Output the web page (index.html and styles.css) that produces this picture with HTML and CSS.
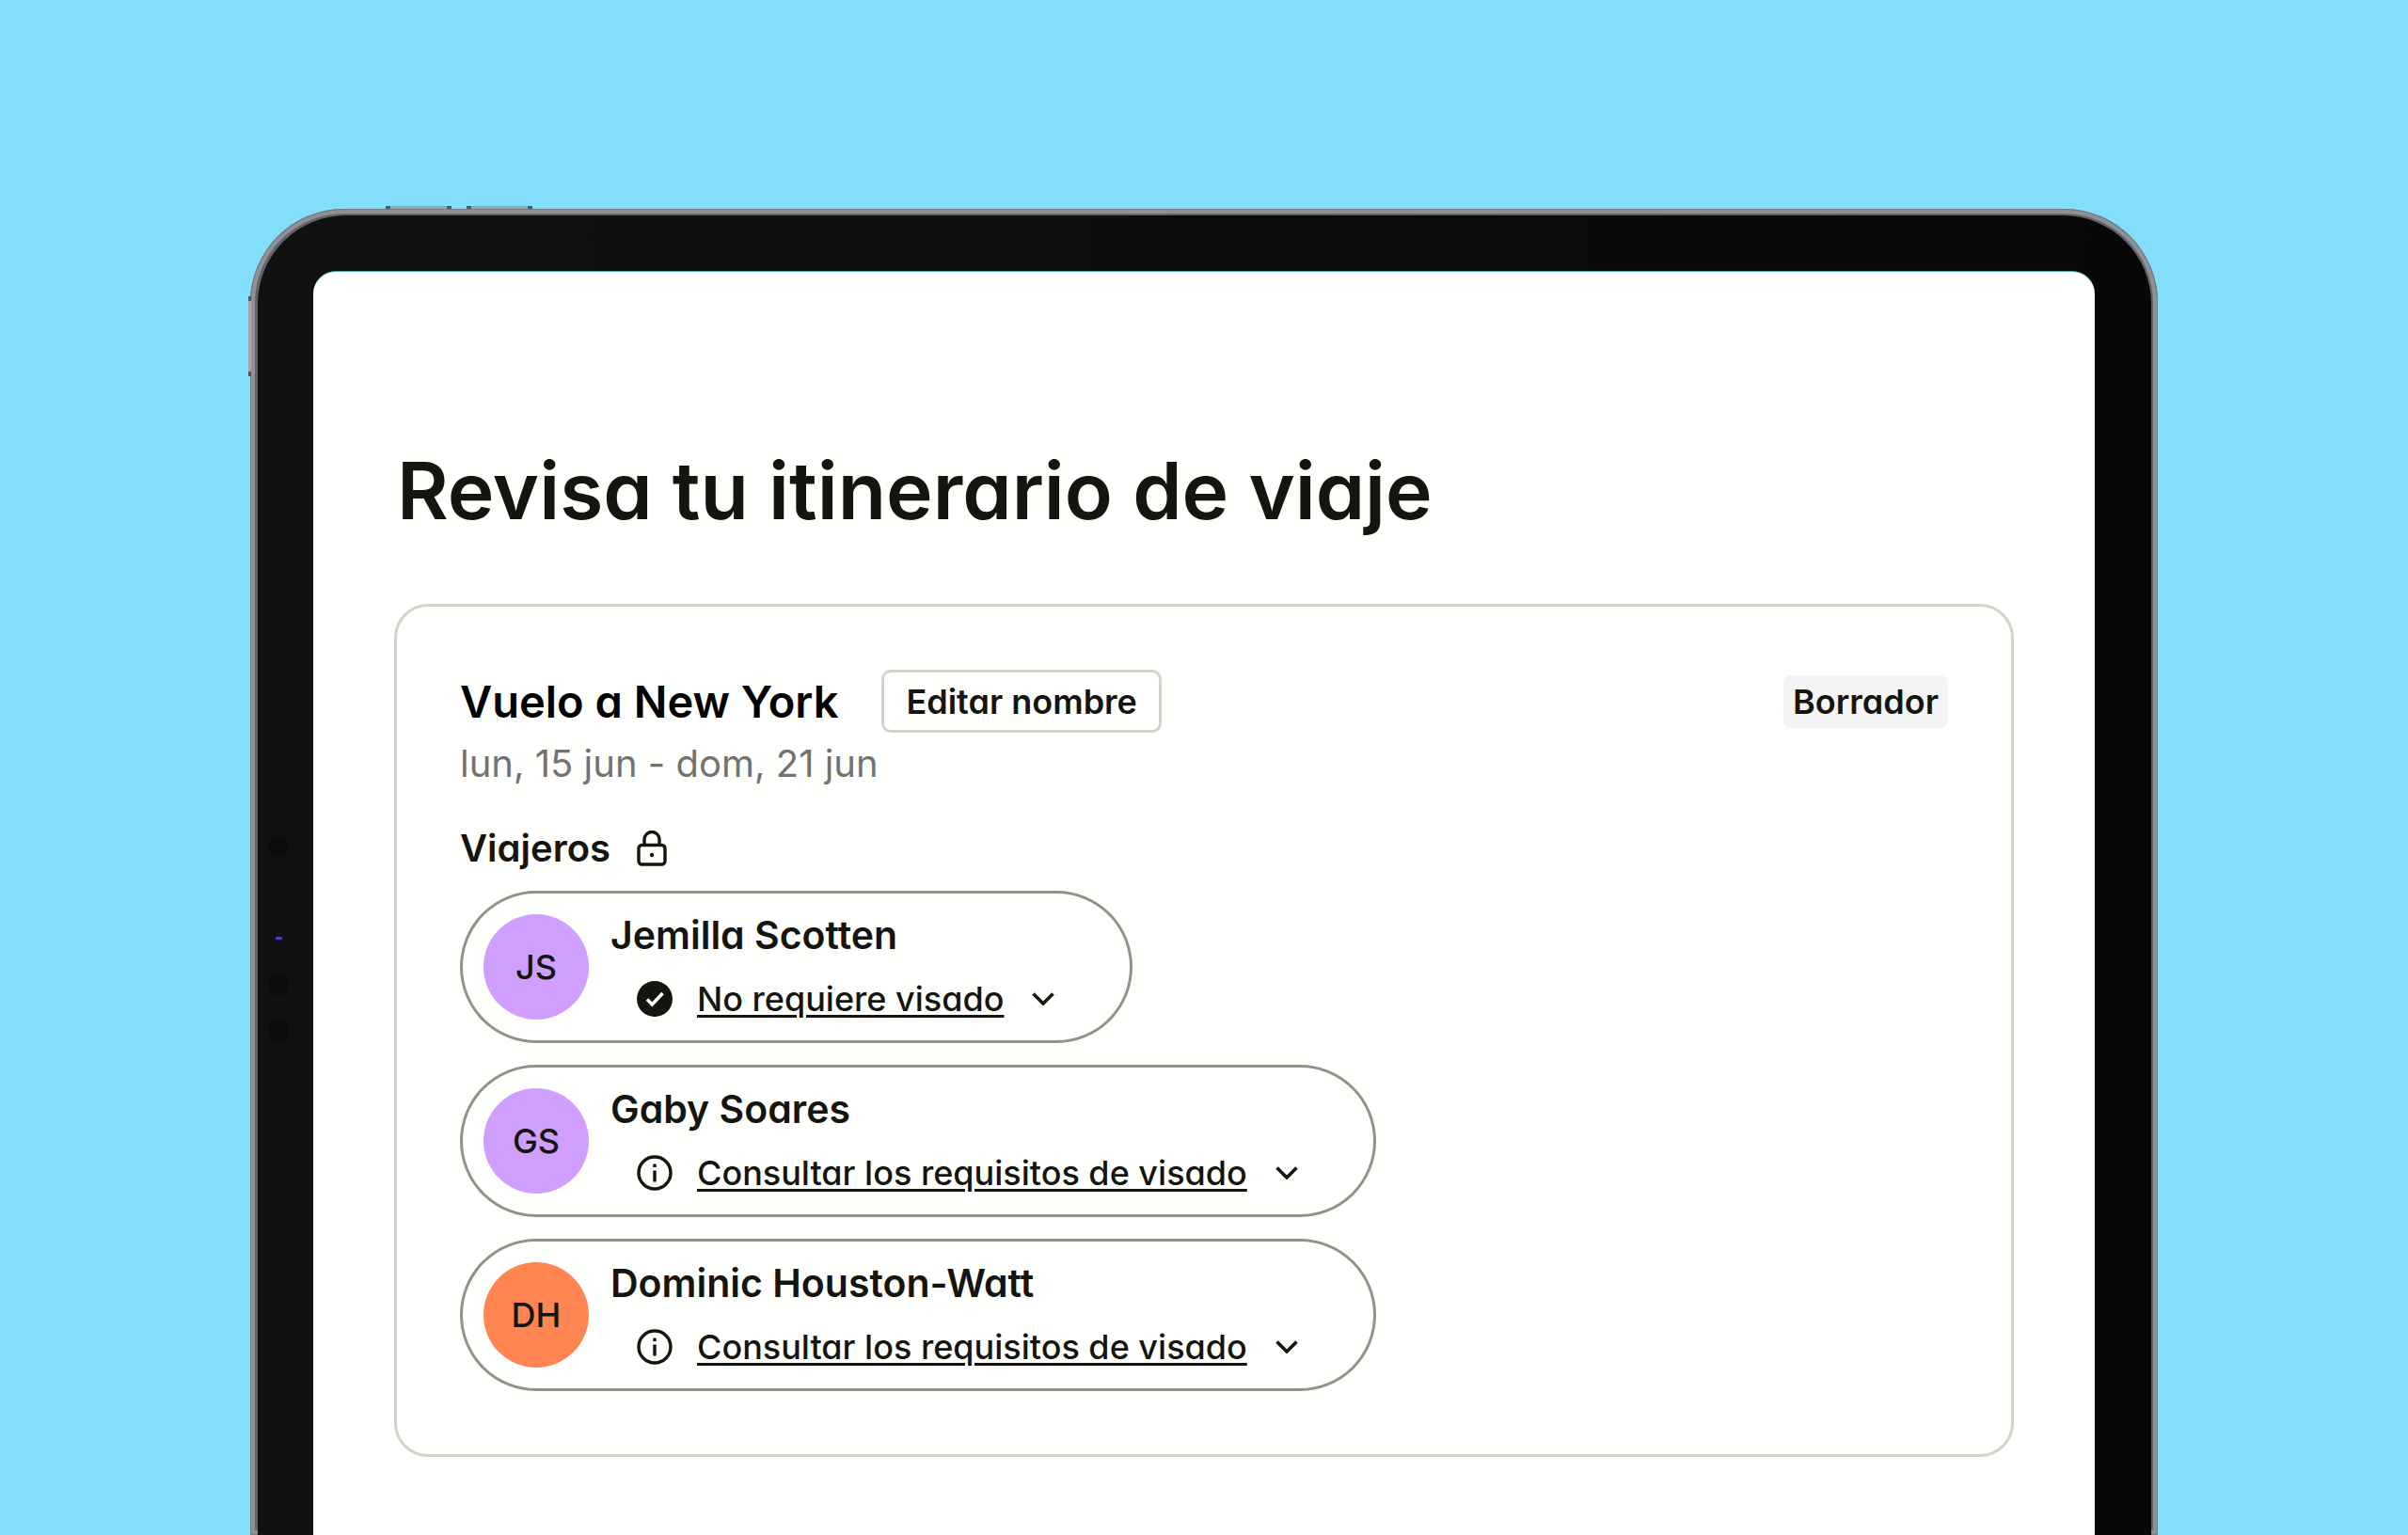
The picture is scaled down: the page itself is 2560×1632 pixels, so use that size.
FILE: index.html
```html
<!DOCTYPE html>
<html lang="es">
<head>
    <meta charset="UTF-8">
    <meta name="viewport" content="width=device-width, initial-scale=1.0">
    <title>Revisa tu itinerario de viaje</title>
    <link rel="stylesheet" href="styles.css">
</head>
<body>
    <div class="tablet">
        <span class="key key-volume-up"></span>
        <span class="key key-volume-down"></span>
        <span class="key key-power"></span>

        <div class="bezel">
            <span class="sensor sensor-top"></span>
            <span class="led"></span>
            <span class="sensor sensor-middle"></span>
            <span class="sensor sensor-bottom"></span>

            <main class="screen">
                <h1>Revisa tu itinerario de viaje</h1>

                <section class="card">
                    <div class="card-header">
                        <h2>Vuelo a New York</h2>
                        <button class="edit" type="button">Editar nombre</button>
                        <span class="badge">Borrador</span>
                    </div>
                    <p class="dates">lun, 15 jun - dom, 21 jun</p>

                    <h3>
                        Viajeros
                        <svg class="lock" viewBox="0 0 32 38" fill="none" stroke="currentColor" stroke-width="3.400">
                            <rect x="2" y="15.500" width="28" height="20.500" rx="3.500"/>
                            <path d="M8 15.500V9.500a8 8 0 0 1 16 0v6"/>
                            <circle cx="16" cy="26" r="2.200" fill="currentColor" stroke="none"/>
                        </svg>
                    </h3>

                    <ul class="travelers">
                        <li class="traveler">
                            <span class="avatar purple">JS</span>
                            <div class="info">
                                <p class="name">Jemilla Scotten</p>
                                <button class="visa" type="button" aria-expanded="false">
                                    <svg class="status" viewBox="0 0 38 38" fill="none">
                                        <circle cx="19" cy="19" r="19" fill="currentColor"/>
                                        <path d="M11 19.500l5.300 5.500L27.500 13" stroke="#fff" stroke-width="3.600"/>
                                    </svg>
                                    <span class="visa-text">No requiere visado</span>
                                    <svg class="chevron" viewBox="0 0 24 14" fill="none" stroke="currentColor" stroke-width="3.600"><path d="M1.500 1.500L12 12L22.500 1.500"/></svg>
                                </button>
                            </div>
                        </li>
                        <li class="traveler">
                            <span class="avatar purple">GS</span>
                            <div class="info">
                                <p class="name">Gaby Soares</p>
                                <button class="visa" type="button" aria-expanded="false">
                                    <svg class="status" viewBox="0 0 38 38" fill="none" stroke="currentColor" stroke-width="3.400">
                                        <circle cx="19" cy="19" r="17"/>
                                        <path d="M19 16.500V28.500M19 9.500V13"/>
                                    </svg>
                                    <span class="visa-text">Consultar los requisitos de visado</span>
                                    <svg class="chevron" viewBox="0 0 24 14" fill="none" stroke="currentColor" stroke-width="3.600"><path d="M1.500 1.500L12 12L22.500 1.500"/></svg>
                                </button>
                            </div>
                        </li>
                        <li class="traveler">
                            <span class="avatar orange">DH</span>
                            <div class="info">
                                <p class="name">Dominic Houston-Watt</p>
                                <button class="visa" type="button" aria-expanded="false">
                                    <svg class="status" viewBox="0 0 38 38" fill="none" stroke="currentColor" stroke-width="3.400">
                                        <circle cx="19" cy="19" r="17"/>
                                        <path d="M19 16.500V28.500M19 9.500V13"/>
                                    </svg>
                                    <span class="visa-text">Consultar los requisitos de visado</span>
                                    <svg class="chevron" viewBox="0 0 24 14" fill="none" stroke="currentColor" stroke-width="3.600"><path d="M1.500 1.500L12 12L22.500 1.500"/></svg>
                                </button>
                            </div>
                        </li>
                    </ul>
                </section>
            </main>
        </div>
    </div>
</body>
</html>
```

FILE: styles.css
```css
* {
    box-sizing: border-box;
}

body {
    margin: 0;
    padding: 222px 266px 0;
    min-height: 100vh;
    display: flex;
    background-color: #83def9;
    color: #15150f;
    font-family: Inter, "Liberation Sans", sans-serif;
    font-weight: 500;
    /* single-storey a */
    font-feature-settings: "cv11";
}

h1, h2, h3, p, ul {
    margin: 0;
    padding: 0;
}

h1, h2, h3 {
    font-weight: 600;
}

button {
    font: inherit;
    font-feature-settings: inherit;
    color: inherit;
    cursor: pointer;
}

/* device */
.tablet {
    position: relative;
    flex: 1;
    display: flex;
    padding: 7px 7px 0 8px;
    border-radius: 100px 100px 0 0;
    background-color: #636469;
    box-shadow: inset 0 0 0 1px #6d7c83, inset 0 0 0 5px #919096;
}

.bezel {
    position: relative;
    flex: 1;
    display: flex;
    padding: 60px 60px 0 59px;
    border-radius: 94px 94px 0 0;
    background: linear-gradient(to right, #111111, #080808);
}

.key {
    position: absolute;
    background-color: #a2a5a8;
    border: 0 solid #4c5a60;
}

.key-volume-up,
.key-volume-down {
    top: -3px;
    width: 70px;
    height: 3px;
    border-width: 0 5px;
}

.key-volume-up {
    left: 144px;
}

.key-volume-down {
    left: 230px;
}

.key-power {
    top: 93px;
    left: -2px;
    width: 3px;
    height: 85px;
    border-width: 5px 0;
}

.sensor {
    position: absolute;
    left: 11px;
    width: 22px;
    height: 22px;
    border-radius: 50%;
    background-color: #0b0b0b;
}

.sensor-top {
    top: 660px;
}

.sensor-middle {
    top: 807px;
}

.sensor-bottom {
    top: 856px;
}

.led {
    position: absolute;
    top: 767px;
    left: 19px;
    width: 7px;
    height: 3px;
    border-radius: 2px;
    background-color: #4a48b8;
    box-shadow: 0 0 4px 1px #1c1a4a;
}

.screen {
    flex: 1;
    padding: 183px 86px 80px;
    border-radius: 24px 24px 0 0;
    background-color: #fffffe;
    box-shadow: 0 -1px 0 #4f9fb2;
}

/* content */
h1 {
    margin-bottom: 70px;
    padding-left: 3px;
    font-size: 84px;
    line-height: 100px;
}

.card {
    padding: 67px;
    border: 3px solid #d3d3ce;
    border-radius: 36px;
}

.card-header {
    display: flex;
    align-items: center;
    margin-bottom: 8px;
}

h2 {
    margin-right: 46px;
    color: #000;
    font-size: 47px;
    line-height: 60px;
}

.edit {
    height: 67px;
    padding: 0 23px;
    border: 3px solid #d3d3ce;
    border-radius: 10px;
    background-color: transparent;
    font-size: 36px;
    font-weight: 600;
}

.badge {
    margin-left: auto;
    padding: 0 10px;
    border-radius: 8px;
    background-color: #f4f4f4;
    font-size: 36px;
    font-weight: 600;
    line-height: 56px;
}

.dates {
    color: #73736c;
    font-size: 40px;
    font-weight: 400;
    line-height: 50px;
}

h3 {
    display: flex;
    align-items: center;
    gap: 28px;
    margin: 40px 0 20px;
    font-size: 40px;
    line-height: 50px;
}

.lock {
    width: 32px;
    height: 38px;
}

.travelers {
    display: flex;
    flex-direction: column;
    align-items: flex-start;
    gap: 23px;
    list-style: none;
}

.traveler {
    display: flex;
    gap: 23px;
    padding: 22px 80px 22px 22px;
    border: 3px solid #92928a;
    border-radius: 81px;
}

.avatar {
    width: 112px;
    height: 112px;
    border-radius: 50%;
    font-size: 36px;
    line-height: 112px;
    text-align: center;
}

.purple {
    background-color: #cf9eff;
}

.orange {
    background-color: #ff8552;
}

.info {
    display: flex;
    flex-direction: column;
    align-items: flex-start;
    gap: 24px;
}

.name {
    font-size: 41px;
    font-weight: 600;
    line-height: 44px;
}

.visa {
    display: flex;
    align-items: center;
    height: 44px;
    padding: 0 0 0 28px;
    border: none;
    background: none;
    font-size: 36px;
    line-height: 44px;
}

.status {
    width: 38px;
    height: 38px;
    margin-right: 26px;
}

.visa-text {
    text-decoration: underline;
    text-decoration-thickness: 3px;
    text-underline-offset: 4px;
}

.chevron {
    width: 24px;
    height: 14px;
    margin-left: 30px;
}
```
